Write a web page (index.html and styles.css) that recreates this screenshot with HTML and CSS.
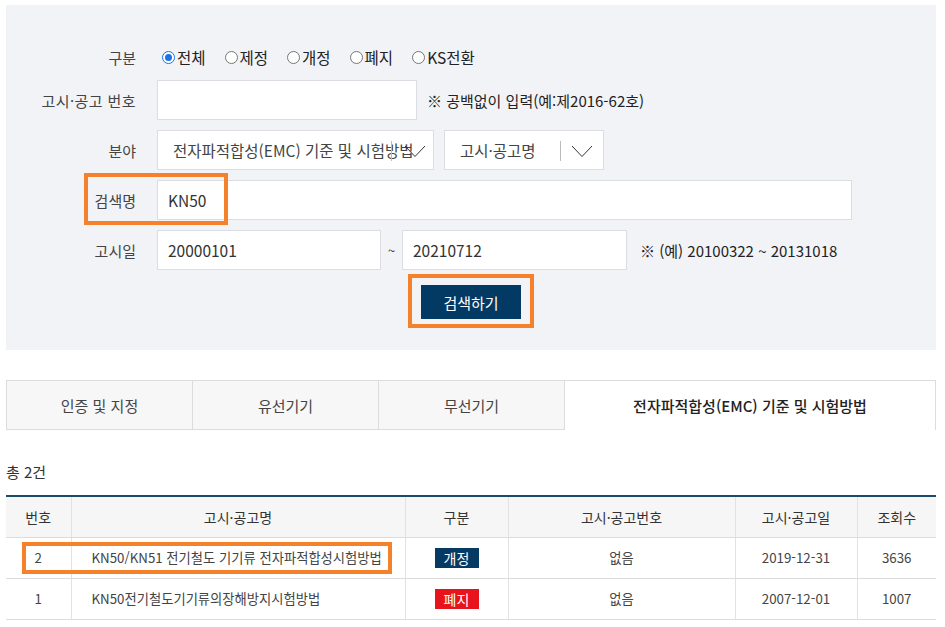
FILE: index.html
```html
<!DOCTYPE html>
<html lang="ko">
<head>
<meta charset="utf-8">
<link rel="stylesheet" href="styles.css">
</head>
<body>
<div class="page">
  <div class="panel">
    <div class="row radio-row">
      <div class="label">구분</div>
      <div class="radios">
        <label class="radio"><span class="dot checked"></span>전체</label>
        <label class="radio"><span class="dot"></span>제정</label>
        <label class="radio"><span class="dot"></span>개정</label>
        <label class="radio"><span class="dot"></span>폐지</label>
        <label class="radio"><span class="dot"></span>KS전환</label>
      </div>
    </div>
    <div class="row">
      <div class="label wide">고시·공고 번호</div>
      <div class="field w260"></div>
      <div class="note">※ 공백없이 입력(예:제2016-62호)</div>
    </div>
    <div class="row">
      <div class="label">분야</div>
      <div class="select w277">
        <span class="sel-text">전자파적합성(EMC) 기준 및 시험방법</span>
        <span class="sel-div"></span>
        <svg class="chev" width="22" height="13" viewBox="0 0 22 13"><path d="M1 1 L11 11.5 L21 1" fill="none" stroke="#333" stroke-width="1"/></svg>
      </div>
      <div class="select w160">
        <span class="sel-text">고시·공고명</span>
        <span class="sel-div"></span>
        <svg class="chev" width="22" height="13" viewBox="0 0 22 13"><path d="M1 1 L11 11.5 L21 1" fill="none" stroke="#333" stroke-width="1"/></svg>
      </div>
    </div>
    <div class="row">
      <div class="label">검색명</div>
      <div class="field w695 value">KN50</div>
      <div class="hl hl-name"></div>
    </div>
    <div class="row">
      <div class="label">고시일</div>
      <div class="field w224 value">20000101</div>
      <div class="tilde">~</div>
      <div class="field w225 value">20210712</div>
      <div class="note note2">※ (예) 20100322 ~ 20131018</div>
    </div>
    <div class="btn-wrap">
      <div class="btn-hl"><button class="btn">검색하기</button></div>
    </div>
  </div>

  <div class="tabs">
    <div class="tab">인증 및 지정</div>
    <div class="tab">유선기기</div>
    <div class="tab">무선기기</div>
    <div class="tab active">전자파적합성(EMC) 기준 및 시험방법</div>
  </div>

  <div class="total">총 2건</div>

  <div class="table-wrap">
    <table class="list">
      <colgroup>
        <col class="c1"><col class="c2"><col class="c3"><col class="c4"><col class="c5"><col class="c6">
      </colgroup>
      <thead>
        <tr><th>번호</th><th>고시·공고명</th><th>구분</th><th>고시·공고번호</th><th>고시·공고일</th><th>조회수</th></tr>
      </thead>
      <tbody>
        <tr><td>2</td><td class="title">KN50/KN51 전기철도 기기류 전자파적합성시험방법</td><td><span class="badge navy">개정</span></td><td>없음</td><td>2019-12-31</td><td>3636</td></tr>
        <tr><td>1</td><td class="title">KN50전기철도기기류의장해방지시험방법</td><td><span class="badge red">폐지</span></td><td>없음</td><td>2007-12-01</td><td>1007</td></tr>
      </tbody>
    </table>
    <div class="hl hl-row"></div>
  </div>
</div>
</body>
</html>
```

FILE: styles.css
```css
* { box-sizing: border-box; }
body {
  margin: 0;
  background: #fff;
  font-family: "Noto Sans CJK KR", "Noto Sans", sans-serif;
  color: #333;
  font-size: 15px;
}
.page { width: 945px; height: 627px; overflow: hidden; padding: 5px 9px 0 6px; }
.panel {
  background: #f2f3f7;
  height: 345px;
  padding-top: 32px;
}
.row {
  display: flex;
  align-items: center;
  height: 40px;
  margin-bottom: 10px;
  position: relative;
}
.radio-row { height: 40px; margin-bottom: 3px; }
.label {
  width: 130px;
  text-align: right;
  margin-right: 21px;
  color: #444;
  flex: none;
  white-space: nowrap;
}
.label.wide { letter-spacing: 0.4px; }
.radios { display: flex; align-items: center; padding-left: 5px; }
.radio { display: flex; align-items: center; margin-right: 19px; color: #222; font-size: 15.5px; }
.dot {
  width: 13px; height: 13px; border-radius: 50%;
  border: 1px solid #767676; background: #fff;
  margin: 0 2px 0 0;
  position: relative;
}
.dot.checked { border-color: #1a73e8; }
.dot.checked::after {
  content: ""; position: absolute; left: 2px; top: 2px;
  width: 7px; height: 7px; border-radius: 50%; background: #1a73e8;
}
.field {
  height: 40px;
  background: #fff;
  border: 1px solid #dcdde2;
  display: flex; align-items: center;
  padding-left: 10px;
  color: #333;
  font-size: 15px;
}
.field.value { font-size: 15.5px; }
.w260 { width: 260px; }
.w695 { width: 695px; }
.w224 { width: 224px; }
.w225 { width: 225px; }
.note { margin-left: 10px; color: #222; }
.note2 { margin-left: 13px; }
.tilde { width: 21px; text-align: center; font-size: 13px; color: #333; }
.select {
  height: 40px;
  background: #fff;
  border: 1px solid #dcdde2;
  position: relative;
  overflow: hidden;
  white-space: nowrap;
  display: flex; align-items: center;
  padding-left: 15px;
  color: #444;
  font-size: 15.5px;
}
.w277 { width: 277px; margin-right: 10px; }
.w160 { width: 160px; }
.sel-div {
  position: absolute; right: 42px; top: 10px;
  width: 1px; height: 20px; background: #bbb;
}
.w277 .sel-div { right: 41px; }
.chev { position: absolute; right: 10px; top: 14px; }
.w277 .chev { right: 7px; }
.hl {
  position: absolute;
  border: 4px solid #f5822a;
  pointer-events: none;
}
.hl-name { left: 78px; top: -7px; width: 144px; height: 52px; }
.btn-wrap { display: flex; justify-content: center; margin-top: -6px; }
.btn-hl {
  border: 4px solid #f5822a;
  padding: 7px 9px 5px 9px;
}
.btn {
  width: 100px; height: 34px;
  background: #033a63;
  color: #fff;
  border: 0;
  font-family: inherit;
  font-size: 15px;
  padding: 0;
}
.tabs {
  display: flex;
  margin-top: 30px;
  height: 50px;
}
.tab {
  width: 186px;
  display: flex; align-items: center; justify-content: center;
  background: #f7f7f7;
  border: 1px solid #dcdcdc;
  border-right: 0;
  color: #444;
}
.tab.active {
  width: 372px;
  background: #fff;
  border-right: 1px solid #dcdcdc;
  border-bottom: 0;
  color: #222;
  font-weight: 500;
}
.total { margin-top: 32px; height: 20px; line-height: 20px; color: #333; }
.table-wrap { position: relative; margin-top: 13px; }
.list {
  width: 930px;
  border-collapse: collapse;
  table-layout: fixed;
  border-top: 2px solid #1d4b6a;
  font-size: 14px;
}
.c1 { width: 65px; }
.c2 { width: 334px; }
.c3 { width: 103px; }
.c4 { width: 227px; }
.c5 { width: 122px; }
.c6 { width: 79px; }
.list th {
  height: 41px;
  background: #f6f6f6;
  font-weight: 400;
  color: #333;
  border-bottom: 1px solid #dcdcdc;
  border-left: 1px solid #e2e2e2;
}
.list td {
  height: 41px;
  text-align: center;
  color: #444;
  font-size: 13.3px;
  border-bottom: 1px solid #dcdcdc;
  border-left: 1px solid #e2e2e2;
}
.list th:first-child, .list td:first-child { border-left: 0; }
.list td.title { text-align: left; padding-left: 20px; }
.badge {
  display: inline-block;
  width: 44px; height: 20px; line-height: 20px;
  color: #fff; font-size: 14px;
}
.badge.navy { background: #063a62; }
.badge.red { background: #e8141b; }
.hl-row { left: 16px; top: 47px; width: 370px; height: 32px; }
```
